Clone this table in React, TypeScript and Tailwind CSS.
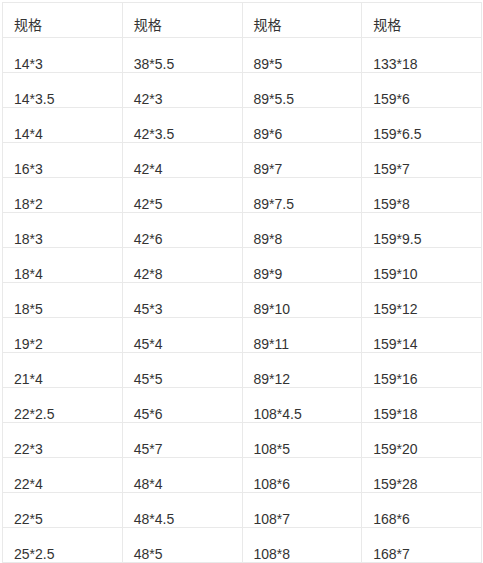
const rows: string[][] = [
  ["14*3", "38*5.5", "89*5", "133*18"],
  ["14*3.5", "42*3", "89*5.5", "159*6"],
  ["14*4", "42*3.5", "89*6", "159*6.5"],
  ["16*3", "42*4", "89*7", "159*7"],
  ["18*2", "42*5", "89*7.5", "159*8"],
  ["18*3", "42*6", "89*8", "159*9.5"],
  ["18*4", "42*8", "89*9", "159*10"],
  ["18*5", "45*3", "89*10", "159*12"],
  ["19*2", "45*4", "89*11", "159*14"],
  ["21*4", "45*5", "89*12", "159*16"],
  ["22*2.5", "45*6", "108*4.5", "159*18"],
  ["22*3", "45*7", "108*5", "159*20"],
  ["22*4", "48*4", "108*6", "159*28"],
  ["22*5", "48*4.5", "108*7", "168*6"],
  ["25*2.5", "48*5", "108*8", "168*7"],
];

export default function App() {
  return (
    <div className="w-[483px] h-[563px] overflow-hidden bg-white pl-[2px] pt-[2px] font-['Liberation_Sans','Noto_Sans_CJK_SC',sans-serif] text-[14px] leading-4 text-[#333]">
      <div className="grid w-[480px] grid-cols-4 border-l border-t border-[#e9e9e9]">
        {["规格", "规格", "规格", "规格"].map((h, i) => (
          <div key={i} className="h-[35px] border-b border-r border-[#e9e9e9] pl-[11px] pt-[14px]">
            {h}
          </div>
        ))}
        {rows.map((r, ri) =>
          r.map((c, ci) => (
            <div key={`${ri}-${ci}`} className="h-[35px] border-b border-r border-[#e9e9e9] pl-[11px] pt-[18px]">
              {c}
            </div>
          ))
        )}
      </div>
    </div>
  );
}
